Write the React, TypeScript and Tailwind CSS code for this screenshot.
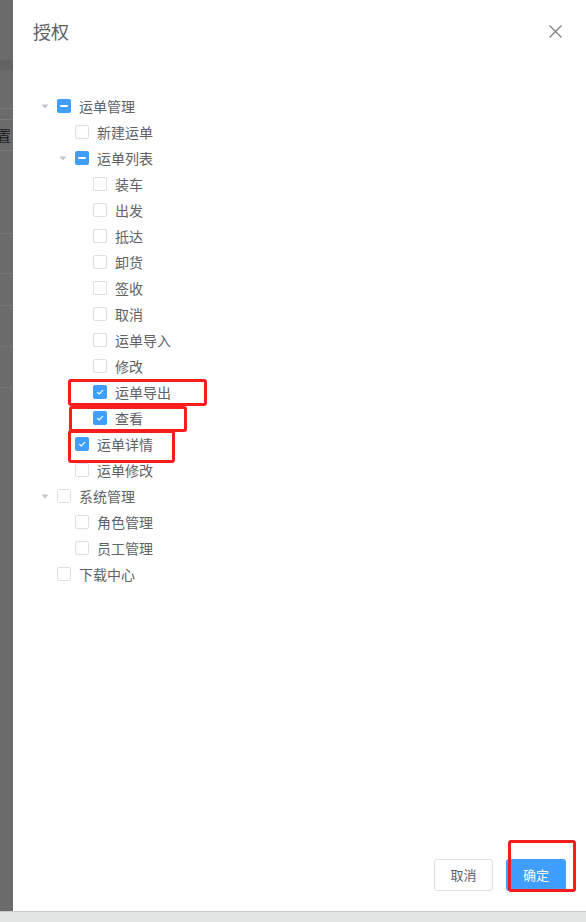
import React from "react";

type CheckState = "none" | "checked" | "half";

type Node = {
  label: string;
  level: number;
  state: CheckState;
  caret?: boolean;
};

const nodes: Node[] = [
  { label: "运单管理", level: 0, state: "half", caret: true },
  { label: "新建运单", level: 1, state: "none" },
  { label: "运单列表", level: 1, state: "half", caret: true },
  { label: "装车", level: 2, state: "none" },
  { label: "出发", level: 2, state: "none" },
  { label: "抵达", level: 2, state: "none" },
  { label: "卸货", level: 2, state: "none" },
  { label: "签收", level: 2, state: "none" },
  { label: "取消", level: 2, state: "none" },
  { label: "运单导入", level: 2, state: "none" },
  { label: "修改", level: 2, state: "none" },
  { label: "运单导出", level: 2, state: "checked" },
  { label: "查看", level: 2, state: "checked" },
  { label: "运单详情", level: 1, state: "checked" },
  { label: "运单修改", level: 1, state: "none" },
  { label: "系统管理", level: 0, state: "none", caret: true },
  { label: "角色管理", level: 1, state: "none" },
  { label: "员工管理", level: 1, state: "none" },
  { label: "下载中心", level: 0, state: "none" },
];

const indent = ["pl-0", "pl-[18px]", "pl-[36px]"];

function Checkbox({ state }: { state: CheckState }) {
  if (state === "none") {
    return (
      <span className="w-[14px] h-[14px] rounded-[2px] border border-[#dcdfe6] bg-white shrink-0" />
    );
  }
  return (
    <span className="w-[14px] h-[14px] rounded-[2px] bg-[#409eff] shrink-0 flex items-center justify-center">
      {state === "half" ? (
        <span className="w-[8px] h-[2px] bg-white rounded-[1px]" />
      ) : (
        <svg width="10" height="10" viewBox="0 0 10 10" fill="none">
          <path d="M2.2 5.1 L4.2 7 L8 3.1" stroke="white" strokeWidth="1.1" />
        </svg>
      )}
    </span>
  );
}

function TreeRow({ node }: { node: Node }) {
  return (
    <div className={`h-[26px] flex items-center ${indent[node.level]}`}>
      <span className="w-[24px] h-[26px] flex items-center justify-center shrink-0">
        {node.caret && (
          <svg width="8" height="5" viewBox="0 0 8 5">
            <path d="M0.5 0.5 L7.5 0.5 L4 4.5 Z" fill="#c0c4cc" />
          </svg>
        )}
      </span>
      <Checkbox state={node.state} />
      <span className="ml-[8px] text-[14px] leading-[26px] text-[#606266]">
        {node.label}
      </span>
    </div>
  );
}

function BackdropStrip() {
  // dimmed page behind the drawer
  return (
    <div className="w-[13px] shrink-0 bg-[#6b6b6b] flex flex-col overflow-hidden">
      <div className="h-[60px]" />
      <div className="h-[10px] bg-[#636363]" />
      <div className="h-[39px] border-b border-[#7a7a7a]" />
      <div className="h-[11px] border-b border-[#7a7a7a]" />
      <div className="h-[31px] flex items-end pb-[8px] overflow-hidden border-b border-[#7a7a7a]">
        <span className="ml-[-3px] text-[14px] leading-none text-[#1c1c1c]">置</span>
      </div>
      <div className="h-[83px] border-b border-[#757575]" />
      <div className="h-[40px] border-b border-[#757575]" />
      <div className="h-[32px] border-b border-[#757575]" />
      <div className="h-[41px] border-b border-[#757575]" />
      <div className="h-[41px] border-b border-[#757575]" />
    </div>
  );
}

export default function App() {
  return (
    <div
      className="w-[586px] h-[922px] flex flex-col relative overflow-hidden bg-white"
      style={{ fontFamily: '"Noto Sans CJK SC", "Noto Sans", sans-serif' }}
    >
      <div className="flex-1 flex">
        <BackdropStrip />
        <div className="flex-1 flex flex-col bg-white">
          <div className="pt-[19px] pl-[20px] pr-[24px] flex items-center justify-between">
            <span className="text-[18px] leading-[24px] text-[#5c5f65]">授权</span>
            <svg width="13" height="13" viewBox="0 0 13 13">
              <path d="M0.5 0.5 L12.5 12.5 M12.5 0.5 L0.5 12.5" stroke="#7a7d83" strokeWidth="1.2" />
            </svg>
          </div>

          <div className="mt-[50px] pl-[20px]">
            {nodes.map((n) => (
              <TreeRow key={n.label} node={n} />
            ))}
          </div>

          <div className="flex-1" />

          <div className="flex justify-end gap-[13px] pr-[20px] pb-[20px]">
            <button className="w-[59px] h-[32px] rounded-[3px] border border-[#dcdfe6] bg-white text-[13px] text-[#606266]">
              取消
            </button>
            <button className="w-[60px] h-[32px] rounded-[3px] bg-[#409eff] text-[13px] text-white">
              确定
            </button>
          </div>
        </div>
      </div>
      <div className="h-[11px] bg-[#e3e5e4] border-t border-[#c9cbcb]" />

      {/* red annotation boxes */}
      <div className="absolute left-[68px] top-[379px] w-[139px] h-[27px] border-[3px] border-[#f81d1d] rounded-[3px]" />
      <div className="absolute left-[69px] top-[406px] w-[118px] h-[26px] border-[3px] border-[#f81d1d] rounded-[3px]" />
      <div className="absolute left-[68px] top-[430px] w-[107px] h-[33px] border-[3px] border-[#f81d1d] rounded-[3px]" />
      <div className="absolute left-[508px] top-[840px] w-[68px] h-[52px] border-[3px] border-[#f81d1d] rounded-[3px]" />
    </div>
  );
}
